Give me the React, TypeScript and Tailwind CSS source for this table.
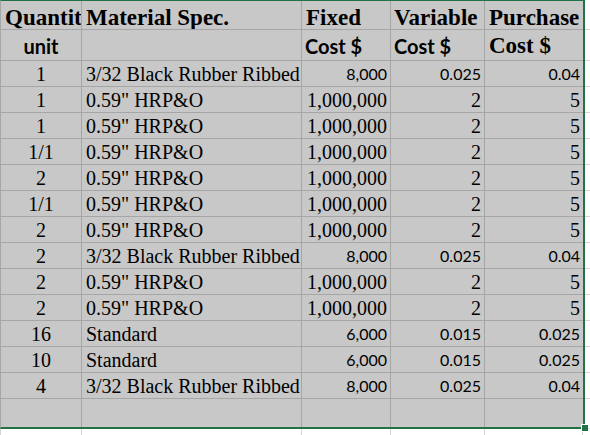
import React from "react";

type Row = {
  qty: string;
  spec: string;
  fixed: string;
  variable: string;
  purchase: string;
  sans: boolean; // numbers typed in the default (Calibri-like) font
};

const rows: Row[] = [
  { qty: "1", spec: "3/32 Black Rubber Ribbed", fixed: "8,000", variable: "0.025", purchase: "0.04", sans: true },
  { qty: "1", spec: '0.59" HRP&O', fixed: "1,000,000", variable: "2", purchase: "5", sans: false },
  { qty: "1", spec: '0.59" HRP&O', fixed: "1,000,000", variable: "2", purchase: "5", sans: false },
  { qty: "1/1", spec: '0.59" HRP&O', fixed: "1,000,000", variable: "2", purchase: "5", sans: false },
  { qty: "2", spec: '0.59" HRP&O', fixed: "1,000,000", variable: "2", purchase: "5", sans: false },
  { qty: "1/1", spec: '0.59" HRP&O', fixed: "1,000,000", variable: "2", purchase: "5", sans: false },
  { qty: "2", spec: '0.59" HRP&O', fixed: "1,000,000", variable: "2", purchase: "5", sans: false },
  { qty: "2", spec: "3/32 Black Rubber Ribbed", fixed: "8,000", variable: "0.025", purchase: "0.04", sans: true },
  { qty: "2", spec: '0.59" HRP&O', fixed: "1,000,000", variable: "2", purchase: "5", sans: false },
  { qty: "2", spec: '0.59" HRP&O', fixed: "1,000,000", variable: "2", purchase: "5", sans: false },
  { qty: "16", spec: "Standard", fixed: "6,000", variable: "0.015", purchase: "0.025", sans: true },
  { qty: "10", spec: "Standard", fixed: "6,000", variable: "0.015", purchase: "0.025", sans: true },
  { qty: "4", spec: "3/32 Black Rubber Ribbed", fixed: "8,000", variable: "0.025", purchase: "0.04", sans: true },
];

const serif = "font-['Liberation_Serif',serif]";
const sans = "font-['Lato',sans-serif]";
const grid = "grid grid-cols-[81px_220px_89px_94px_98px]";
const cell = "flex items-end overflow-hidden whitespace-nowrap border-[#a6a6a6]";

export default function App() {
  return (
    <div className="relative h-[435px] w-[590px] overflow-hidden bg-white text-black">
      <div className="flex">
        {/* selected range */}
        <div className="w-[585px] border-t border-r-2 border-b-2 border-l border-t-[#217346] border-r-[#217346] border-b-[#217346] border-l-[#a6a6a6] bg-[#c8c8c8]">
          {/* header row 1 */}
          <div className={`${grid} h-[29px] ${serif} text-[23px] font-bold leading-[23px]`}>
            <div className={`${cell} border-r border-b pl-[4px]`}>Quantit</div>
            <div className={`${cell} border-r border-b pl-[4px]`}>Material Spec.</div>
            <div className={`${cell} border-r border-b pl-[4px]`}>Fixed</div>
            <div className={`${cell} border-r border-b pl-[3px]`}>Variable</div>
            <div className={`${cell} border-b pl-[4px]`}>Purchase</div>
          </div>
          {/* header row 2 */}
          <div className={`${grid} h-[31px] font-bold`}>
            <div className={`${cell} ${sans} justify-center border-r border-b pb-[4px] text-[20px] leading-[20px]`}>unit</div>
            <div className={`${cell} border-r border-b`} />
            <div className={`${cell} ${sans} border-r border-b pb-[4px] pl-[3px] text-[20px] leading-[20px]`}>Cost $</div>
            <div className={`${cell} ${sans} border-r border-b pb-[4px] pl-[3px] text-[20px] leading-[20px]`}>Cost $</div>
            <div className={`${cell} ${serif} border-b pb-[3px] pl-[4px] text-[23px] leading-[23px]`}>Cost $</div>
          </div>
          {/* data rows */}
          {rows.map((r, i) => {
            const num = r.sans ? `${sans} text-[16px]` : `${serif} text-[20px]`;
            return (
              <div key={i} className={`${grid} h-[26px] leading-[20px]`}>
                <div className={`${cell} ${serif} justify-center border-r border-b pb-[2px] text-[20px]`}>{r.qty}</div>
                <div className={`${cell} ${serif} border-r border-b pb-[2px] pl-[4px] text-[20px]`}>{r.spec}</div>
                <div className={`${cell} ${num} justify-end border-r border-b pb-[2px] pr-[3px]`}>{r.fixed}</div>
                <div className={`${cell} ${num} justify-end border-r border-b pb-[2px] pr-[3px]`}>{r.variable}</div>
                <div className={`${cell} ${num} justify-end border-b pb-[2px] pr-[3px]`}>{r.purchase}</div>
              </div>
            );
          })}
          {/* empty row */}
          <div className={`${grid} h-[28px]`}>
            <div className="border-r border-[#a6a6a6]" />
            <div className="border-r border-[#a6a6a6]" />
            <div className="border-r border-[#a6a6a6]" />
            <div className="border-r border-[#a6a6a6]" />
            <div />
          </div>
        </div>
        {/* unselected cells to the right */}
        <div className="flex w-[5px] flex-col">
          <div className="h-[30px] border-b border-[#d4d4d4]" />
          <div className="h-[31px] border-b border-[#d4d4d4]" />
          {rows.map((_, i) => (
            <div key={i} className="h-[26px] border-b border-[#d4d4d4]" />
          ))}
          <div className="h-[30px] border-b border-[#d4d4d4]" />
        </div>
      </div>
      {/* unselected cells below */}
      <div className="grid h-[6px] grid-cols-[1px_81px_220px_89px_94px_98px_7px]">
        <div className="bg-[#d4d4d4]" />
        <div className="border-r border-[#d4d4d4]" />
        <div className="border-r border-[#d4d4d4]" />
        <div className="border-r border-[#d4d4d4]" />
        <div className="border-r border-[#d4d4d4]" />
        <div className="border-r border-[#d4d4d4]" />
        <div />
      </div>
      {/* fill handle */}
      <div className="absolute left-[581px] top-[424px] h-[8px] w-[8px] border border-white bg-[#217346]" />
    </div>
  );
}
